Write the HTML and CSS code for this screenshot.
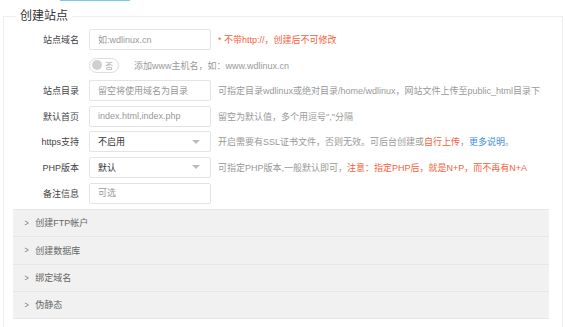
FILE: index.html
```html
<!DOCTYPE html>
<html lang="zh-CN">

<head>
    <meta charset="UTF-8">
    <meta name="viewport" content="width=device-width, initial-scale=1.0">
    <title>创建站点</title>
    <link rel="stylesheet" href="styles.css">
</head>

<body>

    <div class="tab-linha"></div>

    <fieldset class="caixa-site">
        <legend class="titulo">创建站点</legend>

        <div class="linha">
            <label class="rotulo">站点域名</label>
            <input class="campo" placeholder="如:wdlinux.cn">
            <span class="dica vermelho">* 不带http://，创建后不可修改</span>
        </div>

        <div class="linha">
            <span class="rotulo"></span>
            <span class="chave"><i class="bolinha"></i>否</span>
            <span class="dica dica-chave">添加www主机名，如：www.wdlinux.cn</span>
        </div>

        <div class="linha">
            <label class="rotulo">站点目录</label>
            <input class="campo" placeholder="留空将使用域名为目录">
            <span class="dica">可指定目录wdlinux或绝对目录/home/wdlinux，网站文件上传至public_html目录下</span>
        </div>

        <div class="linha">
            <label class="rotulo">默认首页</label>
            <input class="campo" placeholder="index.html,index.php">
            <span class="dica">留空为默认值，多个用逗号","分隔</span>
        </div>

        <div class="linha">
            <label class="rotulo">https支持</label>
            <div class="campo selecao">不启用<i class="seta"></i></div>
            <span class="dica">开启需要有SSL证书文件，否则无效。可后台创建或<span class="vermelho">自行上传</span>，<span class="azul">更多说明</span>。</span>
        </div>

        <div class="linha">
            <label class="rotulo">PHP版本</label>
            <div class="campo selecao">默认<i class="seta"></i></div>
            <span class="dica">可指定PHP版本,一般默认即可，<span class="vermelho">注意：指定PHP后，就是N+P，而不再有N+A</span></span>
        </div>

        <div class="linha">
            <label class="rotulo">备注信息</label>
            <input class="campo" placeholder="可选">
        </div>

        <div class="paineis">
            <div class="painel"><span class="chevron">&gt;</span>创建FTP帐户</div>
            <div class="painel"><span class="chevron">&gt;</span>创建数据库</div>
            <div class="painel"><span class="chevron">&gt;</span>绑定域名</div>
            <div class="painel"><span class="chevron">&gt;</span>伪静态</div>
        </div>
    </fieldset>

</body>

</html>
```

FILE: styles.css
```css
* {
    margin: 0;
    padding: 0;
    box-sizing: border-box;
    font-family: "Liberation Sans", "Noto Sans CJK SC", sans-serif;
}

body {
    width: 565px;
    height: 327px;
    background-color: #fff;
    overflow: hidden;
}

.tab-linha {
    width: 70px;
    height: 1px;
    margin-left: 60px;
    background-color: #7ccbe6;
}

.caixa-site {
    margin: 7px 2px 0 3px;
    border: 1px solid #eeeeee;
    border-bottom: none;
    padding: 5px 13px 0 8px;
    height: 330px;
}

.titulo {
    font-size: 12px;
    color: #333;
    padding: 0 4px;
    margin-left: 4px;
    line-height: 16px;
}

.linha {
    display: flex;
    align-items: center;
    height: 21px;
    margin-bottom: 4.6px;
}

.rotulo {
    width: 67px;
    text-align: right;
    font-size: 9px;
    color: #444;
    margin-right: 10px;
}

.campo {
    width: 122px;
    height: 21px;
    border: 1px solid #e3e3e3;
    border-radius: 2px;
    padding: 0 8px;
    font-size: 9px;
    color: #333;
    outline: none;
}

.campo::placeholder {
    color: #999;
}

.selecao {
    display: flex;
    align-items: center;
    justify-content: space-between;
    color: #333;
}

.seta {
    width: 0;
    height: 0;
    border-left: 4px solid transparent;
    border-right: 4px solid transparent;
    border-top: 4px solid #bbb;
    margin-right: 2px;
}

.dica {
    font-size: 9px;
    color: #999;
    margin-left: 7px;
    white-space: nowrap;
}

.dica-chave {
    margin-left: 15px;
}

.vermelho {
    color: #f5623c;
}

.azul {
    color: #3b8fe0;
}

.chave {
    display: flex;
    align-items: center;
    width: 30px;
    height: 15px;
    border: 1px solid #ddd;
    border-radius: 8px;
    padding-left: 2px;
    font-size: 8px;
    color: #aaa;
    gap: 3px;
}

.bolinha {
    width: 10px;
    height: 10px;
    border-radius: 50%;
    background-color: #d0d0d0;
}

.paineis {
    margin-top: 5px;
    margin-left: 1px;
}

.painel {
    height: 27.5px;
    display: flex;
    align-items: center;
    background-color: #f1f1f1;
    border-top: 1px solid #e6e6e6;
    padding-left: 11px;
    font-size: 9px;
    color: #666;
}

.painel:last-child {
    border-bottom: 1px solid #e6e6e6;
}

.chevron {
    font-size: 9px;
    color: #777;
    margin-right: 6px;
    transform: scaleX(0.8);
}
```
